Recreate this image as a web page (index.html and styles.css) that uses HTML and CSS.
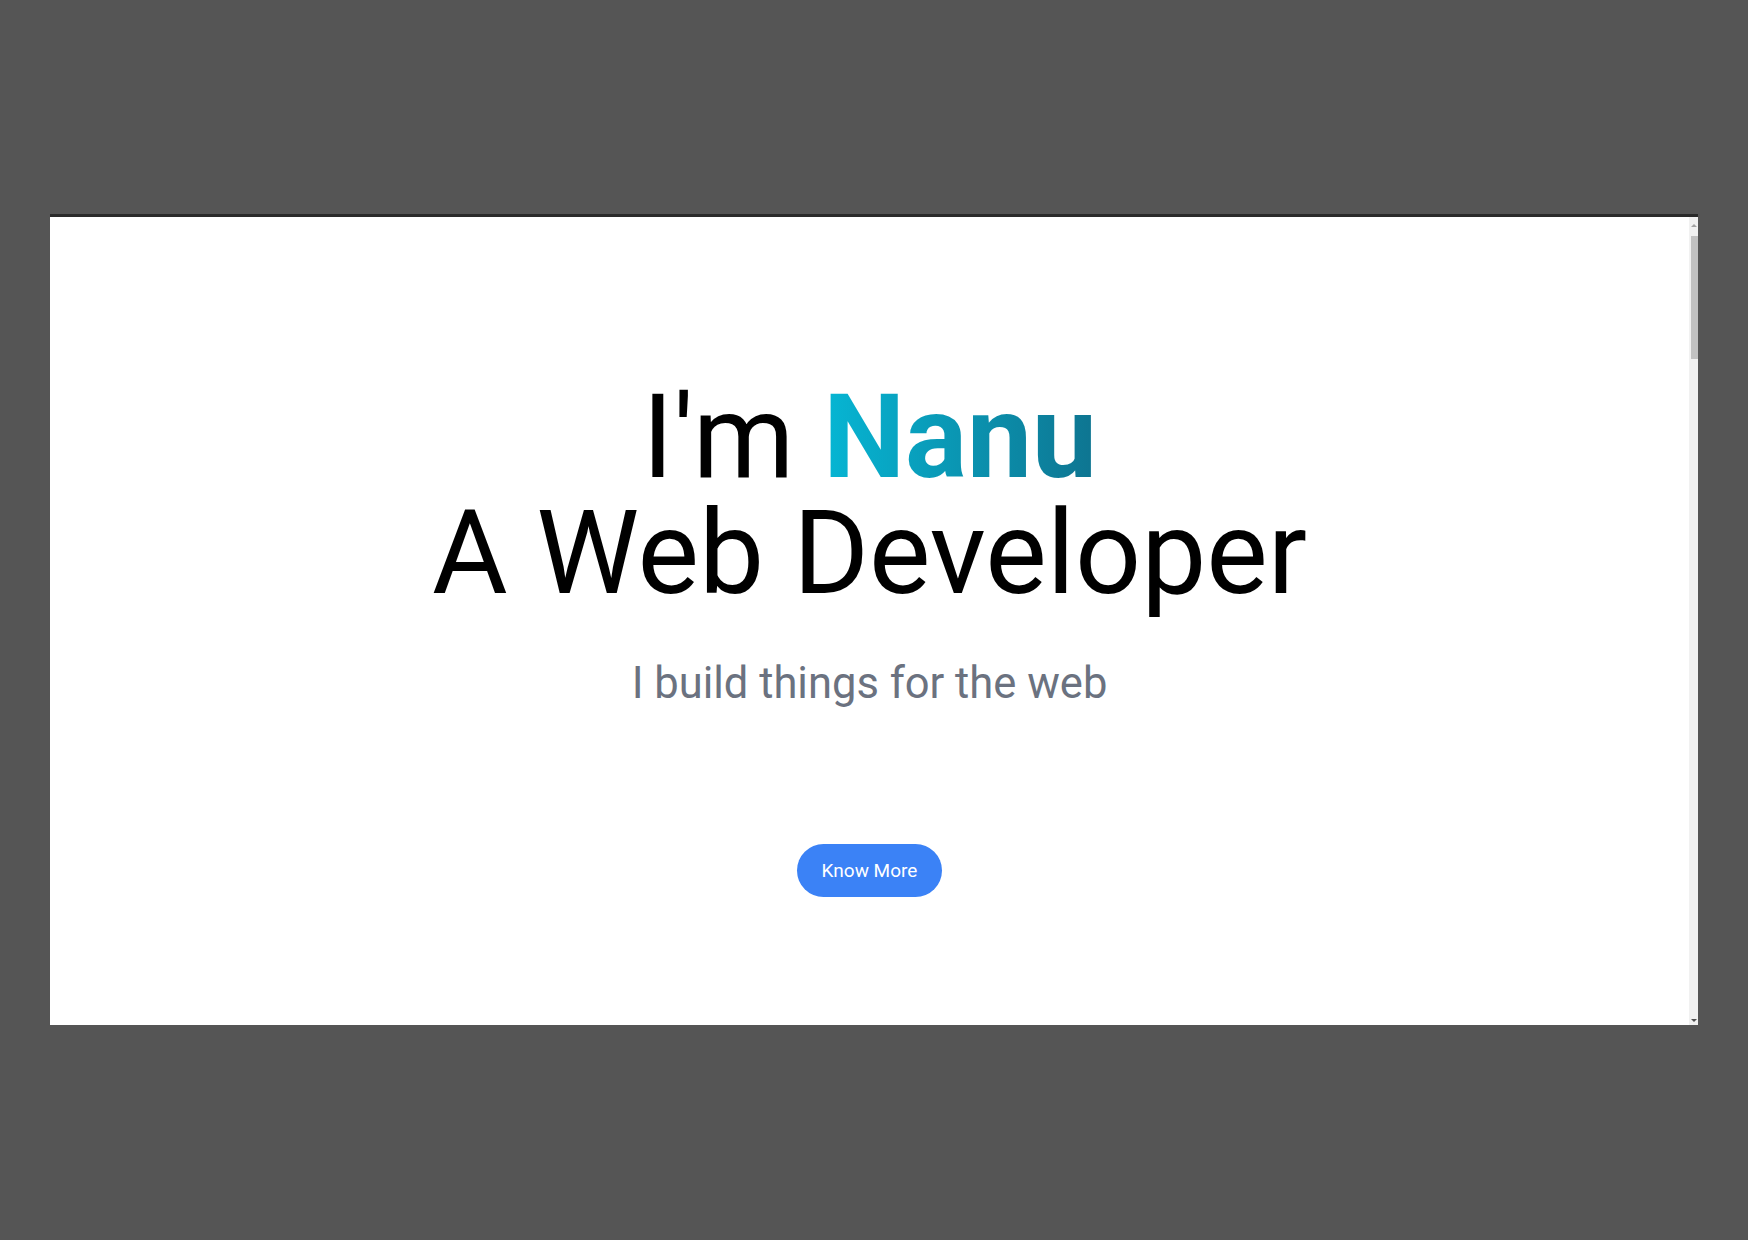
FILE: index.html
```html
<!DOCTYPE html>
<html lang="en">
<head>
<meta charset="utf-8">
<title>Nanu</title>
<link rel="stylesheet" href="styles.css">
</head>
<body>
<div class="frame">
  <div class="viewport">
    <main class="hero">
      <h1 class="headline">
        <span class="line">I'm <span class="name">Nanu</span></span>
        <span class="line">A Web Developer</span>
      </h1>
      <p class="tagline">I build things for the web</p>
      <button class="cta" type="button">Know More</button>
    </main>
    <div class="scrollbar">
      <span class="arrow arrow-up"></span>
      <span class="thumb"></span>
      <span class="arrow arrow-down"></span>
    </div>
  </div>
</div>
</body>
</html>
```

FILE: styles.css
```css
html, body {
  margin: 0;
  padding: 0;
}
body {
  background: #555555;
  width: 1748px;
  height: 1240px;
  overflow: hidden;
  font-family: Roboto, "Liberation Sans", Arial, sans-serif;
}
.frame {
  margin: 214px 0 0 50px;
  width: 1648px;
  border-top: 3px solid #2a2a2a;
}
.viewport {
  display: flex;
  height: 808px;
  background: #ffffff;
}
.hero {
  flex: 1;
  display: flex;
  flex-direction: column;
  align-items: center;
  padding-top: 162px;
}
.headline {
  margin: 0;
  font-size: 116px;
  line-height: 116px;
  font-weight: 400;
  color: #000;
  text-align: center;
}
.line {
  display: block;
}
.name {
  font-weight: 700;
  background: linear-gradient(to right, #06b6d4, #0e7490);
  -webkit-background-clip: text;
  background-clip: text;
  color: transparent;
}
.tagline {
  margin: 46px 0 0;
  font-size: 43.5px;
  line-height: 54px;
  color: #6b7280;
}
.cta {
  margin-top: 133px;
  height: 53px;
  padding: 0 25px;
  border: none;
  border-radius: 27px;
  background: #3b82f6;
  color: #ffffff;
  font-family: Roboto, "Liberation Sans", Arial, sans-serif;
  font-size: 19px;
}
.scrollbar {
  width: 9px;
  background: #f1f1f1;
  display: flex;
  flex-direction: column;
  align-items: flex-end;
  position: relative;
}
.thumb {
  display: block;
  width: 7px;
  height: 123px;
  margin-top: 19px;
  background: #c1c1c1;
}
.arrow {
  position: absolute;
  right: 1px;
  width: 0;
  height: 0;
  border-left: 3px solid transparent;
  border-right: 3px solid transparent;
}
.arrow-up {
  top: 7px;
  border-bottom: 3px solid #a3a3a3;
}
.arrow-down {
  bottom: 3px;
  border-top: 3px solid #505050;
}
```
